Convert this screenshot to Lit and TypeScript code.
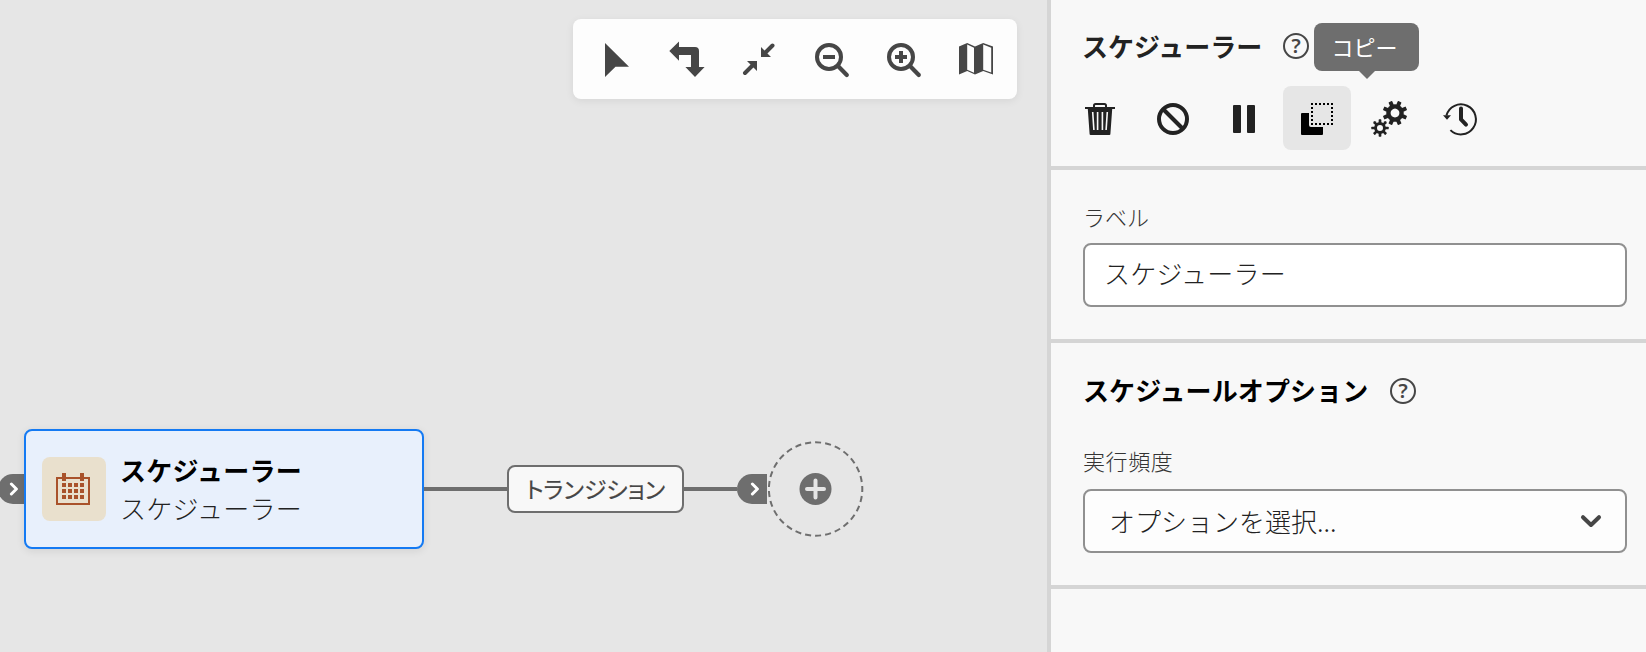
import { LitElement, html, css, svg } from "lit";
import { customElement, property } from "lit/decorators.js";

const gear = (cx: number, cy: number, body: number, outer: number, hole: number, tooth: number, turn: number) => svg`
  <g transform="translate(${cx} ${cy}) rotate(${turn})">
    <circle r=${(body + hole) / 2} fill="none" stroke="currentColor" stroke-width=${body - hole}></circle>
    ${[0, 45, 90, 135, 180, 225, 270, 315].map(
      (a) => svg`<rect x=${-tooth / 2} y=${-outer} width=${tooth} height=${outer - body + 1} rx="0.6" transform="rotate(${a})"></rect>`
    )}
  </g>`;

const lens = svg`<circle cx="15" cy="16" r="12" fill="none" stroke="currentColor" stroke-width="4"></circle>
  <path d="M24.5 25.5L32.8 34" fill="none" stroke="currentColor" stroke-width="4.2" stroke-linecap="round"></path>`;

const icons: Record<string, unknown> = {
  select: svg`<path d="M7 2L31 25.7H17.5L7 36Z"></path>`,
  route: svg`<path d="M-.7 10L9 .4V6H25a4 4 0 0 1 4 4V26H34.6L25 36L15.4 26H21V14H9V19.8Z"></path>`,
  fit: svg`<path d="M19 6V16H29Z M5 20H15V30Z"></path>
    <path d="M23.5 11.5L30.5 4.5M3 32L10.5 24.5" fill="none" stroke="currentColor" stroke-width="4" stroke-linecap="round"></path>`,
  zoomOut: svg`${lens}<path d="M9 14h12v4H9z"></path>`,
  zoomIn: svg`${lens}<path d="M9 14h12v4H9z M13 10h4v12h-4z"></path>`,
  map: svg`<path fill-rule="evenodd" d="M1 5.6L9.2 2L17 5.6L25.2 2L35 5.6V33.6L25.2 30L17 33.6L9.2 30L1 33.6Z M9.2 3.6V28.8L16 31.8V6.8Z M25.2 3.6V28.8L33.2 31.6V6.8Z"></path>`,
  trash: svg`<path d="M11 7V4.6a1.6 1.6 0 0 1 1.6-1.6H21.4a1.6 1.6 0 0 1 1.6 1.6V7" fill="none" stroke="currentColor" stroke-width="2"></path>
    <path d="M2 6H32V8H29.2L27.4 33a1 1 0 0 1-1 1H7.6a1 1 0 0 1-1-1L4.8 8H2Z"></path>
    <path d="M9.7 11L10.9 29M14.6 11V29M19.4 11V29M24.3 11L23.1 29" fill="none" stroke="#f8f8f8" stroke-width="1.6"></path>`,
  ban: svg`<circle cx="18" cy="18" r="14" fill="none" stroke="currentColor" stroke-width="4"></circle>
    <path d="M8 8L28 28" stroke="currentColor" stroke-width="4"></path>`,
  pause: svg`<rect x="6" y="4" width="8" height="28" rx="1"></rect><rect x="20" y="4" width="8" height="28" rx="1"></rect>`,
  copy: svg`<path fill="#000" d="M2 13a1 1 0 0 1 1-1H10V24a2 2 0 0 0 2 2H24V33a1 1 0 0 1-1 1H3a1 1 0 0 1-1-1Z"></path>
    <path d="M12 3H34M12 23H34M13 2V24M33 2V24" fill="none" stroke="#000" stroke-width="2" stroke-dasharray="2 2"></path>`,
  gears: svg`${gear(24, 12, 8.8, 12.3, 4.4, 4, 22.5)}${gear(9, 27, 5.9, 8.7, 3, 2.7, 0)}`,
  history: svg`<path d="M3.4 14.5A15 15 0 1 1 7.4 29.1" fill="none" stroke="currentColor" stroke-width="2"></path>
    <path d="M0 14.2H8L4 18.8Z"></path>
    <path d="M18 7.6V18.4L23 23.6" fill="none" stroke="currentColor" stroke-width="4" stroke-linecap="round" stroke-linejoin="round"></path>`,
  calendar: svg`<path d="M1 7H33V33H1Z" fill="none" stroke="currentColor" stroke-width="2"></path>
    <path d="M6 2h4v8H6zM24 2h4v8h-4z"></path>
    ${[12, 18, 24].map((y) => [6, 12, 18, 24].map((x) => svg`<rect x=${x} y=${y} width="4" height="4"></rect>`))}`,
};

@customElement("ui-icon")
class UiIcon extends LitElement {
  @property() name = "";
  static styles = css`
    :host { display: block; width: 36px; height: 36px; flex: none; }
    svg { display: block; overflow: visible; fill: currentColor; }
  `;
  render() {
    return html`<svg width="36" height="36" viewBox="0 0 36 36">${icons[this.name]}</svg>`;
  }
}

@customElement("help-mark")
class HelpMark extends LitElement {
  static styles = css`
    :host {
      display: flex; align-items: center; justify-content: center; flex: none;
      width: 26px; height: 26px; box-sizing: border-box; border: 2px solid #464646; border-radius: 50%;
      color: #464646; font: 600 20px/22px "Noto Sans", sans-serif;
    }
  `;
  render() {
    return html`<span>?</span>`;
  }
}

@customElement("flow-port")
class FlowPort extends LitElement {
  static styles = css`
    :host {
      display: flex; align-items: center; justify-content: flex-end; flex: none; box-sizing: border-box;
      width: 30px; height: 30px; padding-right: 7px; background: #6e6e6e; border-radius: 15px 0 0 15px;
    }
    :host([first]) { width: 26px; padding-right: 5px; }
    svg { display: block; }
  `;
  render() {
    return html`<svg width="10" height="14" viewBox="0 0 10 14">
      <path d="M2.4 2L7.4 7L2.4 12" fill="none" stroke="#fff" stroke-width="3" stroke-linecap="round" stroke-linejoin="round"></path>
    </svg>`;
  }
}

@customElement("app-root")
class AppRoot extends LitElement {
  static styles = css`
    :host {
      display: flex; width: 1646px; height: 652px; overflow: hidden; background: #e6e6e6; color: #222;
      font-family: "Noto Sans CJK JP", sans-serif; font-size: 26px; line-height: 36px; white-space: nowrap;
    }
    * { box-sizing: border-box; }
    .canvas { width: 1047px; flex: none; overflow: hidden; display: flex; flex-direction: column; padding-top: 19px; }
    .toolbar {
      display: flex; gap: 36px; align-self: flex-end; width: 444px; height: 80px; margin-right: 30px;
      padding: 22px 0 0 25px; background: #fdfdfd; border-radius: 8px; color: #464646;
      box-shadow: 0 2px 8px rgba(0, 0, 0, 0.07);
    }
    .flow { display: flex; align-items: center; height: 120px; margin: 330px 0 0 -2px; }
    .node {
      display: flex; align-items: center; gap: 14px; width: 400px; height: 120px; padding-left: 16px; flex: none;
      background: #e8f0fc; border: 2px solid #147af3; border-radius: 8px; box-shadow: 0 2px 8px rgba(0, 0, 0, 0.09);
    }
    .tile {
      display: flex; align-items: center; justify-content: center; width: 64px; height: 64px;
      border-radius: 8px; background: #e9e0cd; color: #a9522a;
    }
    .names { letter-spacing: 0.25px; padding-bottom: 1px; }
    .name { font-weight: 700; color: #000; height: 38px; line-height: 38px; }
    .kind { font-weight: 300; color: #222; height: 38px; line-height: 38px; }
    .wire { height: 4px; background: #6e6e6e; flex: none; }
    .wire-a { width: 83px; }
    .wire-b { width: 53px; }
    .transition {
      display: flex; align-items: center; justify-content: center; width: 177px; height: 48px; flex: none;
      border: 2px solid #6e6e6e; border-radius: 8px; background: #f8f8f8; color: #464646; padding-bottom: 2px;
      font-size: 23px; font-weight: 400; font-feature-settings: "palt"; -webkit-text-stroke: 0.2px #464646;
    }
    .add { display: block; margin-left: 1px; flex: none; }
    .panel { flex: 1; display: flex; flex-direction: column; background: #f8f8f8; border-left: 4px solid #d5d5d5; }
    .head { height: 170px; border-bottom: 4px solid #d5d5d5; padding: 28px 0 0 16px; }
    .title-row { display: flex; align-items: center; gap: 21px; height: 36px; padding-left: 15px; }
    .title { font-weight: 700; padding-bottom: 1px; }
    .actions { display: flex; gap: 4px; margin-top: 22px; }
    .action {
      position: relative; display: flex; align-items: center; justify-content: center;
      width: 68px; height: 64px; padding-top: 2px; border-radius: 8px;
    }
    .active { background: #e6e6e6; }
    .tip {
      position: absolute; left: 31px; top: -63px; width: 105px; height: 48px; border-radius: 8px; background: #6e6e6e;
      color: #fff; font-size: 22px; line-height: 46px; text-align: center; padding-right: 4px;
    }
    .tip::after {
      content: ""; position: absolute; left: 45px; top: 48px;
      border: 8px solid transparent; border-top-color: #6e6e6e; border-bottom: 0;
    }
    .section { padding: 0 19px 0 32px; border-bottom: 4px solid #d5d5d5; }
    .label-section { height: 173px; padding-top: 30px; }
    .option-section { height: 246px; padding-top: 29px; }
    .label { font-size: 22px; line-height: 32px; height: 43px; font-weight: 300; color: #333; }
    .field {
      display: flex; align-items: center; justify-content: space-between; height: 64px; padding: 0 23px 4px 19px;
      border: 2px solid #909090; border-radius: 8px; background: #fff; font-weight: 300; letter-spacing: 0.25px;
    }
    .select { background: #fdfdfd; padding-left: 24px; padding-bottom: 1px; letter-spacing: 0; }
    .chevron { display: block; }
    .subtitle { display: flex; align-items: center; gap: 18px; height: 38px; margin-bottom: 34px; font-weight: 700; color: #000; }
    .subtitle span { width: 289px; padding-bottom: 2px; letter-spacing: 0.1px; }
    .freq { height: 45px; letter-spacing: 0.6px; }
  `;

  render() {
    return html`
      <main class="canvas">
        <div class="toolbar">
          ${["select", "route", "fit", "zoomOut", "zoomIn", "map"].map((n) => html`<ui-icon name=${n}></ui-icon>`)}
        </div>
        <div class="flow">
          <flow-port first></flow-port>
          <div class="node">
            <div class="tile"><ui-icon name="calendar"></ui-icon></div>
            <div class="names">
              <div class="name">スケジューラー</div>
              <div class="kind">スケジューラー</div>
            </div>
          </div>
          <div class="wire wire-a"></div>
          <div class="transition">トランジション</div>
          <div class="wire wire-b"></div>
          <flow-port></flow-port>
          <svg class="add" width="96" height="96" viewBox="0 0 96 96">
            <circle cx="47.6" cy="48" r="46.7" fill="none" stroke="#6e6e6e" stroke-width="2"
              pathLength="290" stroke-dasharray="6 4" stroke-dashoffset="3"></circle>
            <circle cx="47.5" cy="48" r="16" fill="#6e6e6e"></circle>
            <path d="M39 48H56M47.5 39.5V56.5" stroke="#e6e6e6" stroke-width="4" stroke-linecap="round"></path>
          </svg>
        </div>
      </main>
      <aside class="panel">
        <div class="head">
          <div class="title-row"><span class="title">スケジューラー</span><help-mark></help-mark></div>
          <div class="actions">
            ${["trash", "ban", "pause", "copy", "gears", "history"].map(
              (n) => html`<div class="action ${n === "copy" ? "active" : ""}">
                <ui-icon name=${n}></ui-icon>
                ${n === "copy" ? html`<div class="tip">コピー</div>` : ""}
              </div>`
            )}
          </div>
        </div>
        <div class="section label-section">
          <div class="label">ラベル</div>
          <div class="field">スケジューラー</div>
        </div>
        <div class="section option-section">
          <div class="subtitle"><span>スケジュールオプション</span><help-mark></help-mark></div>
          <div class="label freq">実行頻度</div>
          <div class="field select">
            <span>オプションを選択...</span>
            <svg class="chevron" width="22" height="14" viewBox="0 0 22 14">
              <path d="M3 3.2L11 11L19 3.2" fill="none" stroke="#464646" stroke-width="4" stroke-linecap="round" stroke-linejoin="round"></path>
            </svg>
          </div>
        </div>
      </aside>
    `;
  }
}
